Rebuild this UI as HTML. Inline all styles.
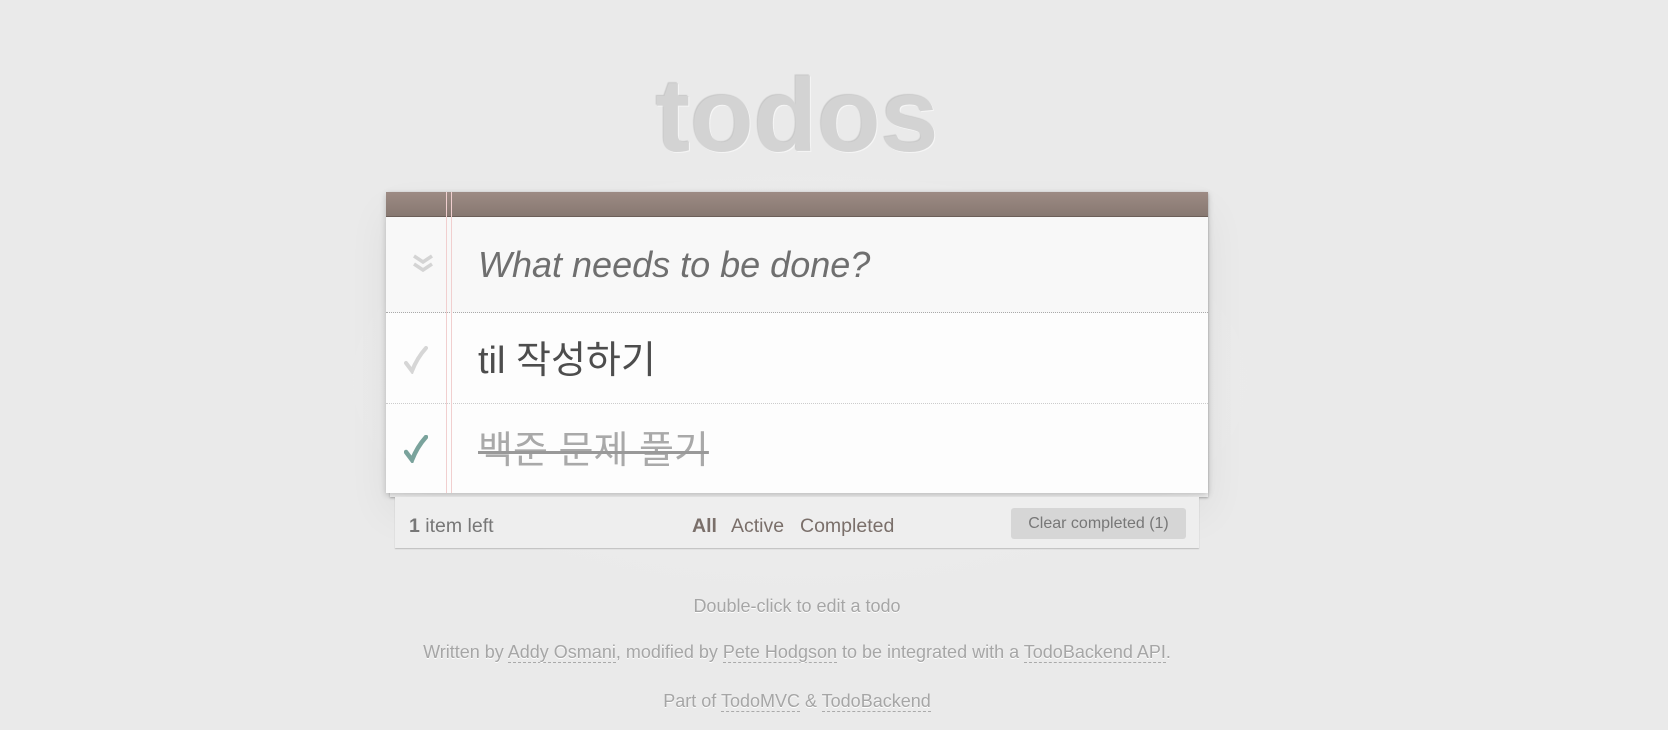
<!DOCTYPE html>
<html><head><meta charset="utf-8">
<style>
html,body{margin:0;padding:0;width:1668px;height:730px;overflow:hidden;background:#eaeaea;font-family:"Liberation Sans","Noto Sans CJK KR",sans-serif;}
.abs{position:absolute;}
#title{left:597px;width:400px;top:56px;text-align:center;font-size:104px;font-weight:bold;color:#d3d3d3;line-height:120px;text-shadow:-1px -1px 1px rgba(0,0,0,0.15),1px 1px 0 #f5f5f5;}
#glow{left:300px;top:150px;width:1000px;height:460px;border-radius:50%;background:radial-gradient(ellipse at center,rgba(255,255,255,0.25),rgba(255,255,255,0) 70%);}
#paper2{left:390px;top:192px;width:818px;height:305px;background:#f7f7f7;box-shadow:0 1px 2px rgba(0,0,0,0.25);}
#card{left:386px;top:192px;width:822px;height:301px;background:#fdfdfd;box-shadow:0 2px 6px rgba(0,0,0,0.2),0 20px 40px rgba(0,0,0,0.06);}
#bar{left:0;top:0;width:822px;height:25px;background:linear-gradient(#9d8b84,#877871);border-bottom:1px solid #6c5f59;box-sizing:border-box;}
#inrow{left:0;top:25px;width:822px;height:96px;background:#f8f8f8;border-bottom:1px dotted #aaa;box-sizing:border-box;}
.row{left:0;width:822px;border-bottom:1px dotted #ccc;box-sizing:border-box;}
.red{top:0;width:1px;height:301px;background:#f1cfcf;}
.txt{font-size:36px;white-space:nowrap;}
#footer{left:395px;top:497px;width:804px;height:51px;background:#eeeeee;box-shadow:0 1px 1px rgba(0,0,0,0.2);color:#777;font-size:20px;}
.f{top:515px;font-size:19.5px;color:#7a6f6a;white-space:nowrap;}
#clear{left:1011px;top:508px;width:175px;height:31px;background:#d6d6d6;border-radius:3px;color:#777;font-size:16px;text-align:center;line-height:32px;}
.info{left:0;width:1594px;text-align:center;font-size:18px;color:#a6a6a6;text-shadow:0 1px 0 #fff;}
.info u{text-decoration:none;border-bottom:1px dashed #aaa;}
</style></head><body>
<div class="abs" id="glow"></div>
<div class="abs" id="title">todos</div>
<div class="abs" id="paper2"></div>
<div class="abs" id="card">
  <div class="abs" id="bar"></div>
  <div class="abs" id="inrow"></div>
  <div class="abs row" style="top:121px;height:91px;"></div>
  <div class="abs row" style="top:212px;height:89px;border:none"></div>
  <div class="abs red" style="left:60px"></div>
  <div class="abs red" style="left:65px"></div>
  <svg class="abs" style="left:26px;top:62px" width="22" height="19" viewBox="0 0 22 19"><path d="M2 2 L11 8 L20 2 M2 10 L11 16 L20 10" fill="none" stroke="#d4d4d4" stroke-width="3.5"/></svg>
  <svg class="abs" style="left:18px;top:154px" width="24" height="28" viewBox="0 0 24 28"><path d="M2 17 L8 25 Q13 12 22 2" fill="none" stroke="#d6d6d6" stroke-width="4" stroke-linecap="round"/></svg>
  <svg class="abs" style="left:18px;top:243px" width="24" height="28" viewBox="0 0 24 28"><path d="M2 17 L8 25 Q13 12 22 2" fill="none" stroke="#7aa39c" stroke-width="4.5" stroke-linecap="round"/></svg>
  <div class="abs txt" style="left:92px;top:52px;font-style:italic;color:#6f6f6f;">What needs to be done?</div>
  <div class="abs txt" style="left:92px;top:137px;color:#4d4d4d;font-size:38px;">til 작성하기</div>
  <div class="abs txt" style="left:92px;top:227px;color:#a9a9a9;font-size:38px;text-decoration:line-through;text-decoration-color:#999;text-decoration-thickness:3px;">백준 문제 풀기</div>
</div>
<div class="abs" id="footer"></div>
<div class="abs f" style="left:409px;color:#777"><b>1</b> item left</div>
<div class="abs f" style="left:692px;font-weight:bold;">All</div>
<div class="abs f" style="left:731px;">Active</div>
<div class="abs f" style="left:800px;">Completed</div>
<div class="abs" id="clear">Clear completed (1)</div>
<div class="abs info" style="top:596px">Double-click to edit a todo</div>
<div class="abs info" style="top:642px">Written by <u>Addy Osmani</u>, modified by <u>Pete Hodgson</u> to be integrated with a <u>TodoBackend API</u>.</div>
<div class="abs info" style="top:691px">Part of <u>TodoMVC</u> &amp; <u>TodoBackend</u></div>
</body></html>
